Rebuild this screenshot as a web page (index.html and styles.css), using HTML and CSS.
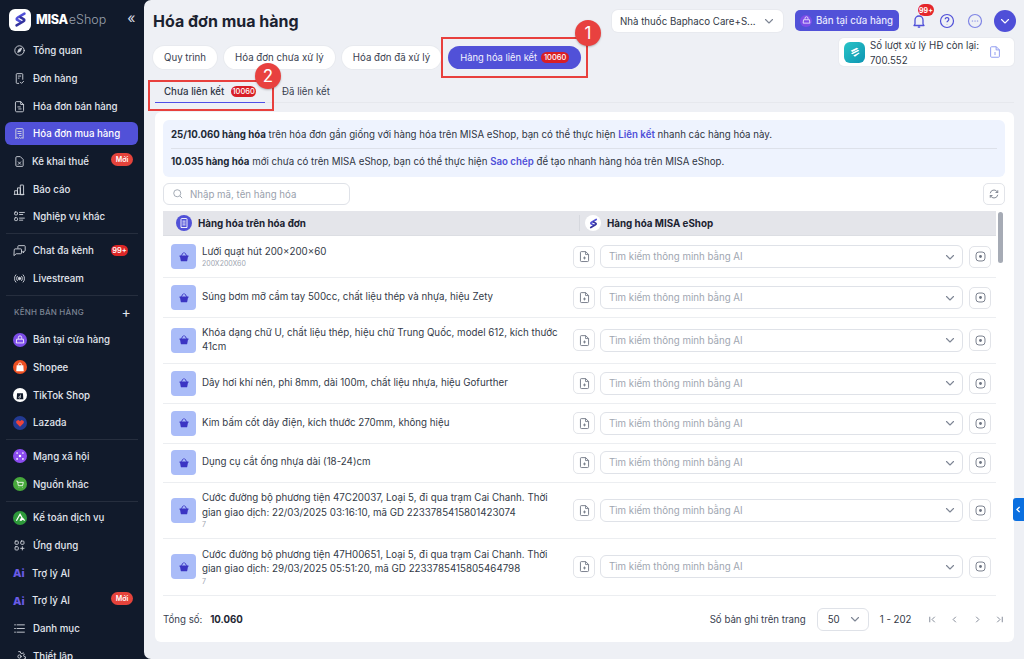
FILE: index.html
```html
<!DOCTYPE html>
<html lang="vi">
<head>
<meta charset="utf-8">
<title>Hóa đơn mua hàng</title>
<link rel="stylesheet" href="styles.css">
</head>
<body>
<svg class="sprite" width="0" height="0" aria-hidden="true">
  <defs>
    <symbol id="s-mark" viewBox="0 0 24 24">
      <path d="M17 4.500 8.500 9.500c-1.800 1.100-1.800 2.600 0 3.400l3.500 1.700" fill="none" stroke="#5151d8" stroke-width="3.200" stroke-linecap="round"/>
      <path d="M7 19.500l8.500-5c1.800-1.100 1.800-2.600 0-3.400L12 9.400" fill="none" stroke="#33339e" stroke-width="3.200" stroke-linecap="round"/>
    </symbol>
    <symbol id="i-basket" viewBox="0 0 16 16">
      <path d="M2 6h12v1.500h-.7l-1 5.500a1 1 0 0 1-1 .8H4.700a1 1 0 0 1-1-.8l-1-5.500H2z" fill="#3b35c3"/>
      <path d="M4.500 6 7 2.500M11.500 6 9 2.500" stroke="#3b35c3" stroke-width="1.300" fill="none" stroke-linecap="round"/>
    </symbol>
    <symbol id="i-docplus" viewBox="0 0 16 16">
      <path d="M4 2h5.500L13 5.500V13a1.200 1.200 0 0 1-1.200 1.200H4.200A1.200 1.200 0 0 1 3 13V3a1 1 0 0 1 1-1z" fill="none" stroke="#6b7280" stroke-width="1.100"/>
      <path d="M9.300 2v3.600H13M8 8v3.600M6.200 9.800h3.600" fill="none" stroke="#6b7280" stroke-width="1"/>
    </symbol>
    <symbol id="i-target" viewBox="0 0 16 16">
      <rect x="2.500" y="2.500" width="11" height="11" rx="3.500" fill="none" stroke="#6b7280" stroke-width="1.100"/>
      <circle cx="8" cy="8" r="1.700" fill="#6b7280"/>
    </symbol>
    <symbol id="i-chev" viewBox="0 0 12 12">
      <path d="M2.500 4.500 6 8l3.500-3.500" fill="none" stroke="currentColor" stroke-width="1.100" stroke-linecap="round" stroke-linejoin="round"/>
    </symbol>
  </defs>
</svg>

<div class="app">
  <aside class="sidebar">
    <div class="brand">
      <span class="brand-logo"><svg width="19" height="19"><use href="#s-mark"/></svg></span>
      <span class="brand-misa">MISA</span><span class="brand-eshop">eShop</span>
      <span class="brand-collapse">«</span>
    </div>
    <nav class="nav">
      <a class="nav-item"><span class="nav-icon"><svg viewBox="0 0 16 16" class="ico"><circle cx="8" cy="8" r="5.800"/><path d="M10.500 5.500 9 9 5.800 10.300 7 7z" fill="currentColor"/></svg></span><span>Tổng quan</span></a>
      <a class="nav-item"><span class="nav-icon"><svg viewBox="0 0 16 16" class="ico"><path d="M7 14H5a1 1 0 0 1-1-1V3a1 1 0 0 1 1-1h6a1 1 0 0 1 1 1v6M6.500 5h3M6.500 7.500h1M9 12.500l1.500 1.500 2.500-2.500"/></svg></span><span>Đơn hàng</span></a>
      <a class="nav-item"><span class="nav-icon"><svg viewBox="0 0 16 16" class="ico"><path d="M3 3a1 1 0 0 1 1-1h5.500L13 5.500V13a1.500 1.500 0 0 1-1.500 1.500h-7A1.500 1.500 0 0 1 3 13zM9.500 2v3.500H13M6 8.500h3M7 11h3"/></svg></span><span>Hóa đơn bán hàng</span></a>
      <a class="nav-item is-active"><span class="nav-icon"><svg viewBox="0 0 16 16" class="ico"><path d="M3.500 14V3a1 1 0 0 1 1-1h7a1 1 0 0 1 1 1v11l-1.500-1-1.500 1-1.500-1-1.500 1-1.500-1zM6 5.500h4M6 8h4M8 10.500h2"/></svg></span><span>Hóa đơn mua hàng</span></a>
      <a class="nav-item nav-item-tight"><span class="nav-icon"><svg viewBox="0 0 16 16" class="ico"><path d="M3.500 3a1 1 0 0 1 1-1h4.500l3.500 3.500V13a1 1 0 0 1-1 1h-7a1 1 0 0 1-1-1zM6.500 8.500l3 3M9.500 8.500l-3 3"/></svg></span><span>Kê khai thuế</span><span class="nav-new">Mới</span></a>
      <a class="nav-item"><span class="nav-icon"><svg viewBox="0 0 16 16" class="ico"><path d="M2 14V9.500h3.500V14M5.500 14V6H9v8M9 14V2.500h3.500a.5.500 0 0 1 .5.500v11zM1.500 14h12"/></svg></span><span>Báo cáo</span></a>
      <a class="nav-item"><span class="nav-icon"><svg viewBox="0 0 16 16" class="ico"><rect x="2" y="2.500" width="3.500" height="3.500" rx=".8"/><rect x="2" y="9.500" width="3.500" height="3.500" rx=".8"/><path d="M8 3h6M8 5.500h4M8 10h6M8 12.500h4"/></svg></span><span>Nghiệp vụ khác</span></a>
      <div class="nav-divider"></div>
      <a class="nav-item"><span class="nav-icon"><svg viewBox="0 0 16 16" class="ico"><path d="M6 5V3a1 1 0 0 1 1-1h7a1 1 0 0 1 1 1v5a1 1 0 0 1-1 1h-1v2l-2-2M1.500 7a1 1 0 0 1 1-1h7a1 1 0 0 1 1 1v4a1 1 0 0 1-1 1H4l-2.500 2z"/></svg></span><span>Chat đa kênh</span><span class="nav-count">99+</span></a>
      <a class="nav-item"><span class="nav-icon"><svg viewBox="0 0 16 16" class="ico"><circle cx="8" cy="8" r="1.500" fill="currentColor"/><path d="M5.300 5.300a3.800 3.800 0 0 0 0 5.400M10.700 5.300a3.800 3.800 0 0 1 0 5.400M3.500 3.500a6.400 6.400 0 0 0 0 9M12.500 3.500a6.400 6.400 0 0 1 0 9"/></svg></span><span>Livestream</span></a>
      <div class="nav-divider"></div>
      <div class="nav-heading"><span>KÊNH BÁN HÀNG</span><span class="nav-plus">+</span></div>
      <a class="nav-item"><span class="nav-icon"><span class="chan chan-store"><svg viewBox="0 0 12 12" width="10" height="10"><path d="M4 4.500V3a2 2 0 0 1 4 0v1.500M2 5h8l.5 4.500h-9z" fill="none" stroke="#fff" stroke-width="1"/></svg></span></span><span>Bán tại cửa hàng</span></a>
      <a class="nav-item"><span class="nav-icon"><span class="chan chan-shopee"><svg viewBox="0 0 12 12" width="10" height="10"><path d="M2 4h8l.5 7h-9z" fill="#fff"/><path d="M4.200 4V3a1.800 1.800 0 0 1 3.600 0v1" fill="none" stroke="#fff"/></svg></span></span><span>Shopee</span></a>
      <a class="nav-item"><span class="nav-icon"><span class="chan chan-tiktok"><svg viewBox="0 0 12 12" width="10" height="10"><path d="M2.500 4h7l.5 7H2z" fill="#111a2b"/><path d="M6.500 5.500v3.300a1 1 0 1 1-.8-1" fill="none" stroke="#fff" stroke-width=".8"/></svg></span></span><span>TikTok Shop</span></a>
      <a class="nav-item"><span class="nav-icon"><span class="chan chan-lazada"><svg viewBox="0 0 12 12" width="10" height="10"><path d="M6 10.500 1.500 6V3.500L4 2.500 6 4l2-1.500 2.500 1V6z" fill="#f0453a"/></svg></span></span><span>Lazada</span></a>
      <div class="nav-divider"></div>
      <a class="nav-item"><span class="nav-icon"><span class="chan chan-social"><svg viewBox="0 0 12 12" width="10" height="10"><circle cx="6" cy="6" r="1.500" fill="#fff"/><circle cx="2.500" cy="2.500" r="1" fill="#fff"/><circle cx="9.500" cy="2.500" r="1" fill="#fff"/><circle cx="2.500" cy="9.500" r="1" fill="#fff"/><circle cx="9.500" cy="9.500" r="1" fill="#fff"/></svg></span></span><span>Mạng xã hội</span></a>
      <a class="nav-item"><span class="nav-icon"><span class="chan chan-other"><svg viewBox="0 0 12 12" width="10" height="10"><path d="M1.500 2.500h1.500l1 5.500h5l1-4H3.500M4.500 10h.5M8.500 10h.5" fill="none" stroke="#fff" stroke-width="1"/></svg></span></span><span>Nguồn khác</span></a>
      <div class="nav-divider"></div>
      <a class="nav-item"><span class="nav-icon"><span class="chan chan-acc"><svg viewBox="0 0 12 12" width="11" height="11"><path d="M1.500 9.500 5.500 2.500l2 3.500-2 3.500M6.500 9.500l2-2.500 2 2.500" fill="none" stroke="#fff" stroke-width="1.400"/></svg></span></span><span>Kế toán dịch vụ</span></a>
      <a class="nav-item"><span class="nav-icon"><svg viewBox="0 0 16 16" class="ico"><rect x="2.500" y="2.500" width="4" height="4" rx="1"/><rect x="9.500" y="2.500" width="4" height="4" rx="1"/><rect x="2.500" y="9.500" width="4" height="4" rx="1"/><path d="M11.500 9.500v4M9.500 11.500h4"/></svg></span><span>Ứng dụng</span></a>
      <a class="nav-item nav-item-tight"><span class="nav-icon nav-ai">Ai</span><span>Trợ lý AI</span></a>
      <a class="nav-item nav-item-tight"><span class="nav-icon nav-ai">Ai</span><span>Trợ lý AI</span><span class="nav-new">Mới</span></a>
      <a class="nav-item"><span class="nav-icon"><svg viewBox="0 0 16 16" class="ico"><path d="M5 3.500h9M5 8h9M5 12.500h9M2 3.500h1M2 8h1M2 12.500h1"/></svg></span><span>Danh mục</span></a>
      <a class="nav-item"><span class="nav-icon"><svg viewBox="0 0 16 16" class="ico"><circle cx="8" cy="8" r="2"/><path d="M7 2h2l.4 1.800 1.600.7 1.600-1 1.400 1.400-1 1.600.7 1.600 1.800.4v2l-1.800.4-.7 1.600 1 1.600-1.400 1.400-1.600-1-1.600.7L9 16H7"/></svg></span><span>Thiết lập</span></a>
    </nav>
  </aside>

  <main class="main">
    <header class="topbar">
      <h1 class="title">Hóa đơn mua hàng</h1>
      <div class="topbar-right">
        <div class="store-select"><span>Nhà thuốc Baphaco Care+S...</span><svg class="chev" width="12" height="12"><use href="#i-chev"/></svg></div>
        <button class="pos-btn"><span class="pos-ico"><svg viewBox="0 0 12 12" width="9" height="9"><path d="M4 4.500V3a2 2 0 0 1 4 0v1.500M2 5h8l.5 4.500h-9z" fill="none" stroke="#fff" stroke-width="1"/></svg></span>Bán tại cửa hàng</button>
        <span class="top-icon top-bell">
          <svg viewBox="0 0 16 16" width="16" height="16"><path d="M4 11V7a4 4 0 0 1 8 0v4l1 1.500H3zM6.800 14.200h2.400" fill="none" stroke="#4f4fd8" stroke-width="1.300" stroke-linejoin="round"/></svg>
          <span class="bell-badge">99+</span>
        </span>
        <span class="top-icon"><svg viewBox="0 0 16 16" width="16" height="16"><circle cx="8" cy="8" r="6.500" fill="none" stroke="#4f4fd8" stroke-width="1.200"/><path d="M6.200 6.300a1.800 1.800 0 1 1 2.700 1.600c-.6.400-.9.700-.9 1.400M8 11.300v.3" fill="none" stroke="#4f4fd8" stroke-width="1.200"/></svg></span>
        <span class="top-icon"><svg viewBox="0 0 16 16" width="16" height="16"><circle cx="8" cy="8" r="6.500" fill="none" stroke="#7f85e5" stroke-width="1.200"/><path d="M5.300 8h.3M7.900 8h.3M10.400 8h.3" stroke="#7f85e5" stroke-width="1.200" stroke-linecap="round"/></svg></span>
        <span class="avatar"><svg width="12" height="12"><use href="#i-chev"/></svg></span>
      </div>
    </header>

    <div class="tabs-row">
      <div class="pills">
        <button class="pill">Quy trình</button>
        <button class="pill">Hóa đơn chưa xử lý</button>
        <button class="pill">Hóa đơn đã xử lý</button>
        <button class="pill pill-active">Hàng hóa liên kết <span class="count">10060</span></button>
      </div>
      <div class="quota">
        <span class="quota-logo"><svg viewBox="0 0 16 16" width="14" height="14"><path d="M3 6.500 10 3l2 1.200L5 8zM3.500 9.500l8-4 1.500 1-8 4zM6 12l6.500-3.300.8.800L8 13.500z" fill="#fff"/></svg></span>
        <span class="quota-text">Số lượt xử lý HĐ còn lại:<br>700.552</span>
        <svg class="quota-doc" viewBox="0 0 16 16" width="14" height="14"><path d="M4 2h5.500L13 5.500V13a1 1 0 0 1-1 1H4a1 1 0 0 1-1-1V3a1 1 0 0 1 1-1zM9.300 2v3.600H13M8 8v3.500M8 6.700v.2" fill="none" stroke="#8f9bef" stroke-width="1.100"/></svg>
      </div>
    </div>

    <div class="subtabs">
      <div class="subtab subtab-active">Chưa liên kết <span class="count">10060</span></div>
      <div class="subtab">Đã liên kết</div>
    </div>

    <section class="card">
      <div class="info">
        <p class="info-line"><b>25/10.060 hàng hóa</b> trên hóa đơn gần giống với hàng hóa trên MISA eShop, bạn có thể thực hiện <a class="link">Liên kết</a> nhanh các hàng hóa này.</p>
        <p class="info-line"><b>10.035 hàng hóa</b> mới chưa có trên MISA eShop, bạn có thể thực hiện <a class="link">Sao chép</a> để tạo nhanh hàng hóa trên MISA eShop.</p>
      </div>

      <div class="toolbar">
        <div class="search">
          <svg viewBox="0 0 16 16" width="12" height="12"><circle cx="7" cy="7" r="4.700" fill="none" stroke="#9aa1ad" stroke-width="1.200"/><path d="m10.500 10.500 3 3" stroke="#9aa1ad" stroke-width="1.200"/></svg>
          <span>Nhập mã, tên hàng hóa</span>
        </div>
        <button class="icon-btn"><svg viewBox="0 0 16 16" width="12" height="12"><path d="M3 7a5 5 0 0 1 8.800-2.500L13 6M13 9a5 5 0 0 1-8.800 2.500L3 10M13 3v3h-3M3 13v-3h3" fill="none" stroke="#6b7280" stroke-width="1.100"/></svg></button>
      </div>

      <div class="table-wrap">
        <div class="table">
          <div class="thead">
            <div class="th th-left"><span class="th-ico"><svg viewBox="0 0 16 16" width="12" height="12"><path d="M4 14V3a1 1 0 0 1 1-1h6a1 1 0 0 1 1 1v11zM6 5.500h4M6 8h4M6 10.500h4" fill="none" stroke="#fff" stroke-width="1.200"/></svg></span>Hàng hóa trên hóa đơn</div>
            <div class="th th-right"><span class="th-logo"><svg width="13" height="13"><use href="#s-mark"/></svg></span>Hàng hóa MISA eShop</div>
          </div>

          <div class="row row-a">
            <span class="thumb"><svg width="12" height="12"><use href="#i-basket"/></svg></span>
            <div class="name"><div>Lưới quạt hút 200×200×60</div><div class="sub">200X200X60</div></div>
            <button class="icon-btn"><svg width="13" height="13"><use href="#i-docplus"/></svg></button>
            <div class="ai-select"><span>Tìm kiếm thông minh bằng AI</span><svg class="chev" width="12" height="12"><use href="#i-chev"/></svg></div>
            <button class="icon-btn"><svg width="13" height="13"><use href="#i-target"/></svg></button>
          </div>
          <div class="row row-b">
            <span class="thumb"><svg width="12" height="12"><use href="#i-basket"/></svg></span>
            <div class="name"><div>Súng bơm mỡ cầm tay 500cc, chất liệu thép và nhựa, hiệu Zety</div></div>
            <button class="icon-btn"><svg width="13" height="13"><use href="#i-docplus"/></svg></button>
            <div class="ai-select"><span>Tìm kiếm thông minh bằng AI</span><svg class="chev" width="12" height="12"><use href="#i-chev"/></svg></div>
            <button class="icon-btn"><svg width="13" height="13"><use href="#i-target"/></svg></button>
          </div>
          <div class="row row-c">
            <span class="thumb"><svg width="12" height="12"><use href="#i-basket"/></svg></span>
            <div class="name"><div>Khóa dạng chữ U, chất liệu thép, hiệu chữ Trung Quốc, model 612, kích thước 41cm</div></div>
            <button class="icon-btn"><svg width="13" height="13"><use href="#i-docplus"/></svg></button>
            <div class="ai-select"><span>Tìm kiếm thông minh bằng AI</span><svg class="chev" width="12" height="12"><use href="#i-chev"/></svg></div>
            <button class="icon-btn"><svg width="13" height="13"><use href="#i-target"/></svg></button>
          </div>
          <div class="row row-b">
            <span class="thumb"><svg width="12" height="12"><use href="#i-basket"/></svg></span>
            <div class="name"><div>Dây hơi khí nén, phi 8mm, dài 100m, chất liệu nhựa, hiệu Gofurther</div></div>
            <button class="icon-btn"><svg width="13" height="13"><use href="#i-docplus"/></svg></button>
            <div class="ai-select"><span>Tìm kiếm thông minh bằng AI</span><svg class="chev" width="12" height="12"><use href="#i-chev"/></svg></div>
            <button class="icon-btn"><svg width="13" height="13"><use href="#i-target"/></svg></button>
          </div>
          <div class="row row-b">
            <span class="thumb"><svg width="12" height="12"><use href="#i-basket"/></svg></span>
            <div class="name"><div>Kim bấm cốt dây điện, kích thước 270mm, không hiệu</div></div>
            <button class="icon-btn"><svg width="13" height="13"><use href="#i-docplus"/></svg></button>
            <div class="ai-select"><span>Tìm kiếm thông minh bằng AI</span><svg class="chev" width="12" height="12"><use href="#i-chev"/></svg></div>
            <button class="icon-btn"><svg width="13" height="13"><use href="#i-target"/></svg></button>
          </div>
          <div class="row row-e">
            <span class="thumb"><svg width="12" height="12"><use href="#i-basket"/></svg></span>
            <div class="name"><div>Dụng cụ cắt ống nhựa dài (18-24)cm</div></div>
            <button class="icon-btn"><svg width="13" height="13"><use href="#i-docplus"/></svg></button>
            <div class="ai-select"><span>Tìm kiếm thông minh bằng AI</span><svg class="chev" width="12" height="12"><use href="#i-chev"/></svg></div>
            <button class="icon-btn"><svg width="13" height="13"><use href="#i-target"/></svg></button>
          </div>
          <div class="row row-d">
            <span class="thumb"><svg width="12" height="12"><use href="#i-basket"/></svg></span>
            <div class="name"><div>Cước đường bộ phương tiện 47C20037, Loại 5, đi qua trạm Cai Chanh. Thời gian giao dịch: 22/03/2025 03:16:10, mã GD 2233785415801423074</div><div class="sub">7</div></div>
            <button class="icon-btn"><svg width="13" height="13"><use href="#i-docplus"/></svg></button>
            <div class="ai-select"><span>Tìm kiếm thông minh bằng AI</span><svg class="chev" width="12" height="12"><use href="#i-chev"/></svg></div>
            <button class="icon-btn"><svg width="13" height="13"><use href="#i-target"/></svg></button>
          </div>
          <div class="row row-d">
            <span class="thumb"><svg width="12" height="12"><use href="#i-basket"/></svg></span>
            <div class="name"><div>Cước đường bộ phương tiện 47H00651, Loại 5, đi qua trạm Cai Chanh. Thời gian giao dịch: 29/03/2025 05:51:20, mã GD 2233785415805464798</div><div class="sub">7</div></div>
            <button class="icon-btn"><svg width="13" height="13"><use href="#i-docplus"/></svg></button>
            <div class="ai-select"><span>Tìm kiếm thông minh bằng AI</span><svg class="chev" width="12" height="12"><use href="#i-chev"/></svg></div>
            <button class="icon-btn"><svg width="13" height="13"><use href="#i-target"/></svg></button>
          </div>
        </div>
        <div class="scrollbar"><span class="scroll-thumb"></span></div>
      </div>

      <footer class="pager">
        <div class="total">Tổng số: <b>10.060</b></div>
        <div class="pager-right">
          <span>Số bản ghi trên trang</span>
          <div class="page-size"><span>50</span><svg class="chev" width="12" height="12"><use href="#i-chev"/></svg></div>
          <span class="range">1 - 202</span>
          <div class="page-nav">
            <svg viewBox="0 0 12 12" width="11" height="11"><path d="M3 3v6M8.500 3 5.500 6l3 3" class="pg"/></svg>
            <svg viewBox="0 0 12 12" width="11" height="11"><path d="M7.500 3 4.500 6l3 3" class="pg"/></svg>
            <svg viewBox="0 0 12 12" width="11" height="11"><path d="M4.500 3l3 3-3 3" class="pg"/></svg>
            <svg viewBox="0 0 12 12" width="11" height="11"><path d="M9 3v6M3.500 3l3 3-3 3" class="pg"/></svg>
          </div>
        </div>
      </footer>
    </section>

    <div class="mark mark-box-1"></div>
    <div class="mark mark-box-2"></div>
    <div class="mark mark-num mark-num-1">1</div>
    <div class="mark mark-num mark-num-2">2</div>
    <div class="side-handle"><svg viewBox="0 0 12 12" width="9" height="9"><path d="M7.500 2.500 4 6l3.500 3.500" fill="none" stroke="#fff" stroke-width="1.800"/></svg></div>
  </main>
</div>
</body>
</html>
```

FILE: styles.css
```css
* { box-sizing: border-box; }
html, body { margin: 0; padding: 0; height: 100%; overflow: hidden; }
body { font-family: Inter, "Noto Sans", sans-serif; font-size: 9.700px; color: #1f2937; background: #111a2b; }
.sprite { position: absolute; }
button { font: inherit; color: inherit; cursor: pointer; white-space: nowrap; }
p { margin: 0; }

.app { display: flex; width: 1024px; height: 659px; }

/* Sidebar */
.sidebar { width: 144px; flex: none; height: 659px; overflow: hidden; background: #111a2b; color: #e2e6ee; }
.brand { display: flex; align-items: center; height: 37px; padding: 2px 0 0 9px; }
.brand-logo { width: 22px; height: 22px; border-radius: 6px; background: #fff; display: flex; align-items: center; justify-content: center; margin-right: 5px; }
.brand-misa { font-size: 12.500px; font-weight: 800; color: #fff; letter-spacing: -.3px; }
.brand-eshop { font-size: 12.500px; font-weight: 300; color: #9aa1ad; margin-left: 1px; }
.brand-collapse { margin-left: 21px; font-size: 14px; color: #d7dbe3; line-height: 1; padding-bottom: 3px; }
.nav { display: flex; flex-direction: column; padding: 0 6px 0 5px; }
.nav-item { position: relative; flex: none; display: flex; align-items: center; height: 23px; margin: 2.350px 0; border-radius: 6px; padding-left: 8px; font-size: 9.700px; font-weight: 500; color: #e2e6ee; white-space: nowrap; }
.nav-item.is-active { background: #5151d8; color: #fff; }
.nav-icon { width: 20px; flex: none; display: flex; align-items: center; justify-content: flex-start; }
.nav-item-tight .nav-icon { width: 19px; }
.ico { width: 13px; height: 13px; fill: none; stroke: currentColor; stroke-width: 1.100; stroke-linecap: round; stroke-linejoin: round; color: #d4d8e0; }
.nav-new { position: absolute; left: 106px; top: 3px; width: 22px; height: 13px; border-radius: 7px; background: #e5433b; color: #fff; font-size: 7px; font-weight: 600; display: flex; align-items: center; justify-content: center; }
.nav-count { position: absolute; left: 106px; top: 6px; width: 17px; height: 11px; border-radius: 6px; background: #dc2626; color: #fff; font-size: 7.500px; font-weight: 600; display: flex; align-items: center; justify-content: center; }
.nav-divider { flex: none; height: 1px; margin: 2.500px 0 2.500px 1px; background: #262e3e; }
.nav-heading { flex: none; display: flex; justify-content: space-between; align-items: center; height: 27.700px; padding: 0 7px 0 9px; font-size: 8px; font-weight: 500; letter-spacing: .2px; color: #7c8493; }
.nav-plus { font-size: 14px; color: #e2e6ee; line-height: 1; font-weight: 400; }
.chan { width: 14px; height: 14px; border-radius: 50%; display: flex; align-items: center; justify-content: center; }
.chan-store { background: #7c4de8; }
.chan-shopee { background: #ee5022; }
.chan-tiktok { background: #fff; }
.chan-lazada { background: #233a92; }
.chan-social { background: #8b4cf0; }
.chan-other { background: #47a83c; }
.chan-acc { background: #2e9a3b; }
.nav-ai { font-size: 11px; font-weight: 800; color: #6a5ce6; }

/* Main */
.main { position: relative; flex: 1; height: 659px; background: #eef0f5; border-radius: 7px 0 0 7px; padding: 0 11px 17px 8px; display: flex; flex-direction: column; }
.topbar { display: flex; justify-content: space-between; height: 37px; flex: none; padding: 10px 0 0 1px; margin-right: -2px; }
.title { margin: 0; font-size: 16px; line-height: 22px; font-weight: 700; color: #1b2230; white-space: nowrap; }
.topbar-right { display: flex; align-items: flex-start; height: 22px; }
.store-select { width: 171px; height: 22px; display: flex; align-items: center; justify-content: space-between; padding: 0 8px; background: #fff; border-radius: 6px; box-shadow: 0 0 0 1px #e8eaef; color: #333a47; margin-right: 12px; white-space: nowrap; }
.chev { color: #7d8594; flex: none; }
.pos-btn { width: 104px; height: 21px; border: 0; border-radius: 5px; background: #5151d8; color: #e8e8ff; font-weight: 500; display: flex; align-items: center; padding: 0 5px; gap: 4px; margin-right: 11px; }
.pos-ico { width: 12px; height: 12px; flex: none; border-radius: 50%; background: #7c4de8; display: flex; align-items: center; justify-content: center; }
.top-icon { position: relative; width: 28px; height: 22px; display: flex; align-items: center; justify-content: center; }
.top-bell { margin-left: -5px; }
.bell-badge { position: absolute; left: 13px; top: -6px; width: 16px; height: 12px; border-radius: 7px; background: #e5262b; color: #fff; font-size: 7px; font-weight: 700; display: flex; align-items: center; justify-content: center; }
.avatar { width: 22px; height: 22px; border-radius: 50%; background: #4f4fd8; color: #fff; display: flex; align-items: center; justify-content: center; margin-left: 5px; }

.tabs-row { display: flex; justify-content: space-between; align-items: flex-start; flex: none; height: 43px; }
.pills { display: flex; gap: 7px; margin: 9px 0 0 0; }
.pill { height: 23px; padding: 0 11px; border: 0; border-radius: 12px; background: #fff; box-shadow: 0 0 0 1px #e8eaef; color: #3a4150; }
.pill:first-child { margin-left: 1px; }
.pill-active { width: 133px; background: #5151d8; color: #f1f1ff; font-size: 9.400px; font-weight: 400; padding: 0 0 0 12px; display: flex; align-items: center; gap: 4px; box-shadow: none; }
.count { display: inline-flex; align-items: center; justify-content: center; width: 28px; height: 11px; border-radius: 6px; background: #d81f26; color: #fff; font-size: 7.500px; font-weight: 500; }
.quota { width: 175px; height: 28px; margin-top: 1px; background: #fff; border-radius: 5px; box-shadow: 0 0 0 1px #e9ebf0; display: flex; align-items: center; padding: 0 5px; gap: 5px; line-height: 15px; color: #333a47; }
.quota-logo { width: 21px; height: 21px; flex: none; border-radius: 6px; background: linear-gradient(135deg, #29c4c6, #0d95b3); display: flex; align-items: center; justify-content: center; }
.quota-text { flex: 1; white-space: nowrap; padding-top: 2px; }
.quota-doc { flex: none; margin-right: 7px; }

.subtabs { display: flex; flex: none; height: 23px; margin-left: 3px; border-bottom: 1px solid #e6e8ed; }
.subtab { height: 23px; padding: 0 9px; display: flex; align-items: center; gap: 7px; color: #394150; white-space: nowrap; }
.subtab + .subtab { margin-left: 8px; }
.subtab-active { width: 110px; border-bottom: 1.500px solid #4f4fe6; color: #2f3645; font-weight: 500; }

/* Card */
.card { flex: 1; min-height: 0; margin: 9px 0 0 3px; background: #fff; border-radius: 6px; padding: 8px 9px 0 8px; display: flex; flex-direction: column; }
.info { flex: none; height: 57px; background: #eef3fe; border-radius: 6px; padding: 2px 8px 0; color: #2e3543; }
.info-line { line-height: 26px; white-space: nowrap; }
.info-line + .info-line { border-top: 1px solid #dde1ea; line-height: 25px; }
.info-line b { font-weight: 700; color: #222936; }
.link { color: #4f4fd8; font-weight: 600; }
.toolbar { display: flex; justify-content: space-between; flex: none; margin-top: 6px; height: 28px; }
.search { width: 187px; height: 22px; display: flex; align-items: center; gap: 6px; padding: 0 8px; border: 1px solid #dfe2e8; border-radius: 6px; color: #9aa1ad; }
.icon-btn { width: 22px; height: 22px; padding: 0; background: #fff; border: 1px solid #e2e4e9; border-radius: 5px; display: flex; align-items: center; justify-content: center; flex: none; }

.table-wrap { position: relative; flex: 1; min-height: 0; display: flex; }
.table { width: 833px; flex: none; }
.thead { display: flex; height: 25px; background: #e4e5ea; border-bottom: 1px solid #dcdee3; align-items: center; font-size: 9.800px; font-weight: 700; color: #1b2230; }
.th { display: flex; align-items: center; height: 100%; }
.th-left { width: 416px; padding-left: 13px; gap: 6px; }
.th-ico { width: 16px; height: 16px; border-radius: 50%; background: #5151d8; display: flex; align-items: center; justify-content: center; }
.th-right { flex: 1; padding-left: 6px; gap: 6px; position: relative; }
.th-right::before { content: ""; position: absolute; left: 0; top: 4px; bottom: 4px; width: 1px; background: #d6d8de; }
.th-logo { width: 16px; height: 16px; border-radius: 50%; background: #fff; display: flex; align-items: center; justify-content: center; }
.row { display: flex; align-items: center; padding: 0 5px 0 8px; border-bottom: 1.500px solid #eceef1; }
.row-a { height: 42px; }
.row-b { height: 40px; }
.row-c { height: 45.500px; }
.row-d { height: 56.500px; }
.row-e { height: 39px; }
.thumb { width: 25px; height: 25px; flex: none; border-radius: 4px; background: #aabcf8; display: flex; align-items: center; justify-content: center; margin-right: 6px; }
.name { width: 371px; padding-right: 10px; flex: none; font-size: 9.750px; line-height: 14.600px; color: #333a47; }
.sub { font-size: 7px; line-height: 9px; color: #a0a6b1; }
.ai-select { width: 363px; height: 23px; margin: 0 6px 0 5px; display: flex; align-items: center; justify-content: space-between; padding: 0 6px 0 8px; border: 1px solid #dfe2e8; border-radius: 6px; color: #a0a6b1; flex: none; }
.scrollbar { width: 8px; margin-left: 1px; flex: none; }
.scroll-thumb { display: block; width: 5px; height: 51px; margin-top: 1px; margin-left: 1px; border-radius: 3px; background: #a6abb5; }

.pager { flex: none; height: 46px; display: flex; align-items: center; justify-content: space-between; color: #394150; }
.total b { margin-left: 5px; font-weight: 700; color: #1f2634; }
.pager-right { display: flex; align-items: center; }
.page-size { width: 52px; height: 23px; margin: 0 11px; display: flex; align-items: center; justify-content: space-between; padding: 0 7px 0 10px; border: 1px solid #dfe2e8; border-radius: 6px; color: #333a47; }
.range { margin-right: 15px; color: #333a47; }
.page-nav { display: flex; gap: 11.500px; margin-right: 0; }
.pg { fill: none; stroke: #7b8290; stroke-width: 1; }

/* Overlay annotations on the screenshot */
.mark { position: absolute; }
.mark-box-1 { left: 297px; top: 37px; width: 147px; height: 41px; border: 2px solid #e8403d; }
.mark-box-2 { left: 4px; top: 80px; width: 126px; height: 31px; border: 2px solid #e8403d; }
.mark-num { width: 26px; height: 26px; border-radius: 50%; background: #e8413f; color: #fff; font-size: 17px; font-weight: 400; display: flex; align-items: center; justify-content: center; box-shadow: 0 1px 2px rgba(0,0,0,.25); }
.mark-num-1 { left: 431px; top: 20px; }
.mark-num-2 { left: 111px; top: 63px; }
.side-handle { position: absolute; left: 869px; top: 498px; width: 11px; height: 23px; border-radius: 3px 0 0 3px; background: #0a6fe0; display: flex; align-items: center; justify-content: center; }
```
